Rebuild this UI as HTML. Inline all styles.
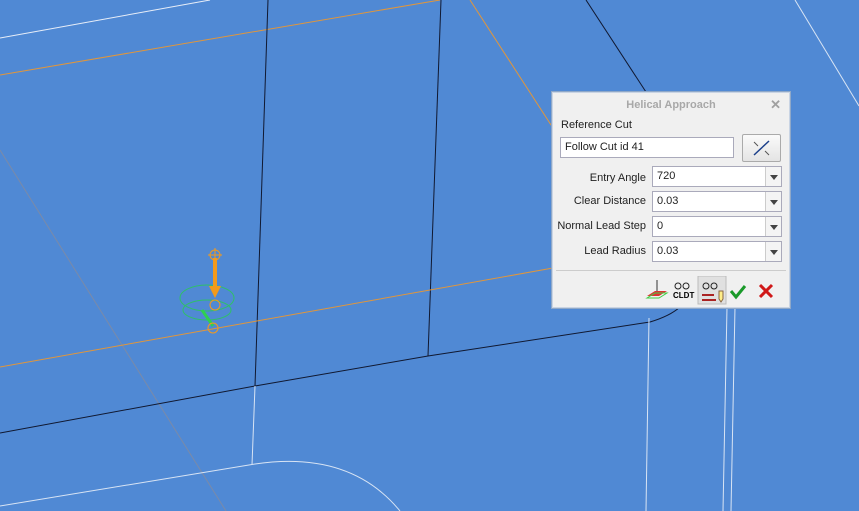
<!DOCTYPE html>
<html><head><meta charset="utf-8"><style>
body{margin:0;width:859px;height:511px;overflow:hidden;background:#5089d4;font-family:"Liberation Sans",sans-serif;}
svg{position:absolute;left:0;top:0}
#dlg{position:absolute;left:552px;top:92px;width:236px;height:214px;background:#f0f0f0;border:1px solid #c9d4e4;box-shadow:0 0 0 1px #8fa8c8;font-size:11px;color:#222}
.t{height:22px;line-height:24px;text-align:center;color:#a8a8a8;font-weight:bold;font-size:11px;position:relative}
.x{position:absolute;right:8px;top:0;color:#a0a0a0;font-size:13px}
.lbl{position:absolute;font-size:11px}
.inp{position:absolute;background:#fff;border:1px solid #aab;height:21px;box-sizing:border-box;line-height:19px;padding-left:4px;font-size:11px}
.dd{position:absolute;right:0;top:0;width:15px;height:19px;border-left:1px solid #ccc;background:#f4f4f4}
.dd:after{content:"";position:absolute;left:4px;top:8px;border-left:4px solid transparent;border-right:4px solid transparent;border-top:5px solid #444}
.sep{position:absolute;left:3px;right:3px;top:177px;border-top:1px solid #ccc}
</style></head><body>
<svg width="859" height="511">
<g fill="none" stroke-width="1">
<line x1="0" y1="38" x2="210" y2="0" stroke="#e8eef8"/>
<line x1="0" y1="75" x2="440" y2="0" stroke="#e0963c"/>
<line x1="268" y1="0" x2="255" y2="386" stroke="#101830"/>
<line x1="441" y1="0" x2="428" y2="356" stroke="#101830"/>
<line x1="470" y1="0" x2="553" y2="128" stroke="#e0963c"/>
<line x1="586" y1="0" x2="646" y2="92" stroke="#101830"/>
<line x1="795" y1="0" x2="859" y2="106" stroke="#d8e4f4"/>
<line x1="0" y1="150" x2="226" y2="511" stroke="#7a8aa8"/>
<line x1="0" y1="367" x2="553" y2="268" stroke="#e0963c"/>
<path d="M0 433 L255 386 L428 356 L650 322 Q670 316 680 307" stroke="#101830"/>
<path d="M649 318 L646 511 M727 307 L723 511 M735 307 L731 511" stroke="#d8e4f4"/>
<path d="M255 386 L252 465 M0 506 L255 464 Q350 450 400 511" stroke="#d8e4f4"/>
<ellipse cx="207" cy="298" rx="27" ry="13" stroke="#2fbf6a"/>
<ellipse cx="207" cy="310" rx="24" ry="10" stroke="#2fbf6a"/>
<line x1="215" y1="258" x2="215" y2="290" stroke="#f39a1c" stroke-width="4"/>
<polygon points="209,286 221,286 215,298" fill="#f39a1c"/>
<circle cx="215" cy="255" r="5" stroke="#f39a1c"/>
<path d="M208 255h14M215 248v14" stroke="#f39a1c"/>
<circle cx="215" cy="305" r="5" stroke="#f39a1c"/>
<line x1="202" y1="310" x2="213" y2="326" stroke="#2fd050" stroke-width="3"/>
<circle cx="213" cy="328" r="5" stroke="#f39a1c"/>
</g></svg>
<div id="dlg">
<div class="t">Helical Approach<span class="x">✕</span></div>
<div class="lbl" style="left:8px;top:26px">Reference Cut</div>
<div class="inp" style="left:7px;top:44px;width:174px">Follow Cut id 41</div>
<div style="position:absolute;left:189px;top:41px;width:37px;height:26px;border:1px solid #aaa;border-radius:2px;background:linear-gradient(#fafafa,#e4e4e4)">
<svg width="37" height="26"><line x1="11" y1="20" x2="26" y2="6" stroke="#1b3f8a" stroke-width="1.5"/><path d="M11 7l4 4M22 16l4 4" stroke="#555"/></svg></div>
<div class="lbl" style="right:143px;top:79px">Entry Angle</div>
<div class="inp" style="left:99px;top:73px;width:130px">720<div class="dd"></div></div>
<div class="lbl" style="right:143px;top:102px">Clear Distance</div>
<div class="inp" style="left:99px;top:98px;width:130px">0.03<div class="dd"></div></div>
<div class="lbl" style="right:143px;top:127px">Normal Lead Step</div>
<div class="inp" style="left:99px;top:123px;width:130px">0<div class="dd"></div></div>
<div class="lbl" style="right:143px;top:152px">Lead Radius</div>
<div class="inp" style="left:99px;top:148px;width:130px">0.03<div class="dd"></div></div>
<div class="sep"></div>
<svg style="position:absolute;left:90px;top:183px" width="140" height="30">
<path d="M4 20l8-5h12l-8 5z" fill="#d33"/><path d="M4 22l8-5h12l-8 5z" fill="none" stroke="#4c4"/><line x1="14" y1="4" x2="14" y2="15" stroke="#333"/>
<text x="30" y="22" font-size="8" font-family="Liberation Sans" font-weight="bold">CLDT</text>
<circle cx="35" cy="10" r="3" fill="none" stroke="#222"/><circle cx="43" cy="10" r="3" fill="none" stroke="#222"/>
<rect x="55" y="0" width="28" height="28" fill="#e0e0e0" stroke="#bbb"/>
<circle cx="63" cy="10" r="3" fill="none" stroke="#222"/><circle cx="71" cy="10" r="3" fill="none" stroke="#222"/>
<path d="M59 19h12M59 24h14" stroke="#a22" stroke-width="2"/><path d="M76 15v8l2 3 2-3v-8z" fill="#fe8" stroke="#864"/>
<path d="M88 15l5 6 9-11" fill="none" stroke="#1a9a2a" stroke-width="3"/>
<path d="M117 9l12 12M129 9l-12 12" stroke="#d01818" stroke-width="3"/>
</svg>
</div>
</body></html>
